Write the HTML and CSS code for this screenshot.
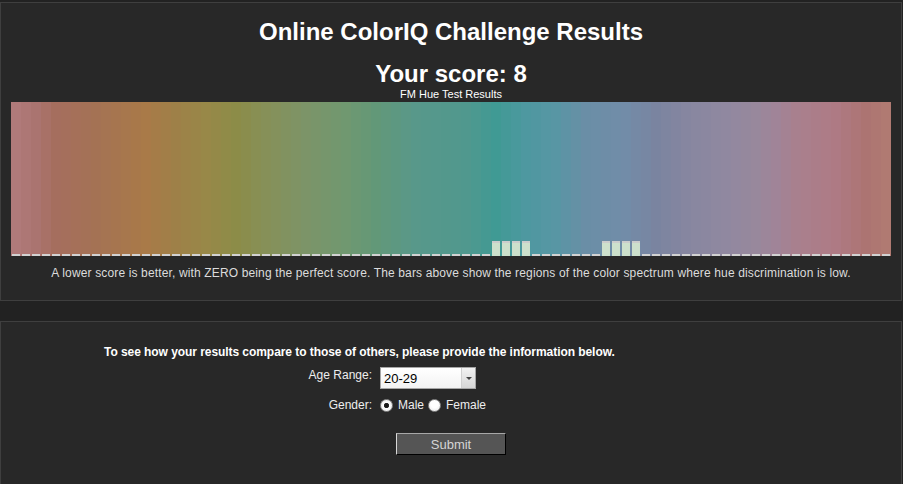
FILE: index.html
```html
<!DOCTYPE html>
<html lang="en">
<head>
<meta charset="utf-8">
<title>Online ColorIQ Challenge Results</title>
<link rel="stylesheet" href="styles.css">
</head>
<body>
<section class="panel results">
  <h1 class="title">Online ColorIQ Challenge Results</h1>
  <h2 class="score">Your score: 8</h2>
  <div class="sub">FM Hue Test Results</div>
  <div class="spectrum" id="spectrum"></div>
  <p class="note">A lower score is better, with ZERO being the perfect score. The bars above show the regions of the color spectrum where hue discrimination is low.</p>
</section>
<section class="panel compare">
  <form class="form">
    <p class="lead">To see how your results compare to those of others, please provide the information below.</p>
    <div class="row">
      <label class="label" for="age">Age Range:</label>
      <div class="select">
        <select id="age" class="sel">
          <option>20-29</option>
        </select>
        <span class="arrow"></span>
      </div>
    </div>
    <div class="row">
      <span class="label">Gender:</span>
      <div class="radios">
        <input type="radio" name="g" class="radio" id="male" checked>
        <label for="male" class="rlabel">Male</label>
        <input type="radio" name="g" class="radio" id="female">
        <label for="female" class="rlabel">Female</label>
      </div>
    </div>
    <div class="row submit-row">
      <span></span>
      <button type="button" class="submit">Submit</button>
    </div>
  </form>
</section>
<script src="script.js"></script>
</body>
</html>
```

FILE: styles.css
```css
html, body {
  margin: 0;
}
body {
  background: #222222;
  padding: 2px 1px 0 0;
  font-family: "Liberation Sans", Arial, sans-serif;
  color: #dddddd;
}
.panel {
  background: #282828;
  border: 1px solid #3f3f3f;
}
.results {
  padding: 16px 0 20px;
}
.title {
  margin: 0;
  font-size: 24px;
  line-height: 26px;
  font-weight: bold;
  color: #ffffff;
  text-align: center;
}
.score {
  margin: 17px 0 0;
  font-size: 24px;
  line-height: 24px;
  font-weight: bold;
  color: #ffffff;
  text-align: center;
}
.sub {
  margin-top: 3px;
  font-size: 11px;
  line-height: 10px;
  text-align: center;
  color: #ffffff;
}
.spectrum {
  display: flex;
  height: 154px;
  margin: 3px 10px 0;
}
.col {
  flex: 1;
  display: flex;
  flex-direction: column;
  justify-content: flex-end;
  align-items: center;
}
.bar {
  width: 8px;
  height: 2px;
  background: #d2d2d2;
}
.bar.tall {
  height: 13px;
  border-top: 2px solid #cccccc;
  background: #cde0cc;
}
.note {
  margin: 10px 0 0;
  font-size: 12px;
  line-height: 14px;
  letter-spacing: 0.14px;
  text-align: center;
  color: #dcdcdc;
}
.compare {
  margin-top: 20px;
}
.form {
  padding: 23px 0 40px 103px;
}
.lead {
  margin: 0;
  font-size: 12px;
  line-height: 14px;
  letter-spacing: -0.06px;
  font-weight: bold;
  color: #ffffff;
}
.row {
  display: grid;
  grid-template-columns: 268px auto;
  column-gap: 8px;
  margin-top: 8px;
  align-items: start;
}
.label {
  text-align: right;
  font-size: 12px;
  line-height: 14px;
  padding-top: 1px;
  color: #eeeeee;
}
.select {
  position: relative;
  width: 96px;
  height: 22px;
}
.sel {
  -webkit-appearance: none;
  appearance: none;
  display: block;
  width: 96px;
  height: 22px;
  box-sizing: border-box;
  margin: 0;
  border: 1px solid #a6a6a6;
  border-radius: 0;
  background: linear-gradient(#ffffff, #f3f3f3);
  padding: 0 0 0 3px;
  font-family: "Liberation Sans", Arial, sans-serif;
  font-size: 13px;
  color: #000000;
  outline: none;
}
.arrow {
  position: absolute;
  top: 1px;
  right: 1px;
  width: 14px;
  height: 20px;
  box-sizing: border-box;
  border-left: 1px solid #d0d0d0;
  background: linear-gradient(#f2f2f2, #d6d6d6);
}
.arrow::after {
  content: "";
  position: absolute;
  left: 4px;
  top: 9px;
  border-left: 3px solid transparent;
  border-right: 3px solid transparent;
  border-top: 3px solid #444444;
}
.radios {
  display: flex;
  align-items: flex-start;
}
.radio {
  -webkit-appearance: none;
  appearance: none;
  width: 13px;
  height: 13px;
  margin: 2px 5px 0 0;
  border-radius: 50%;
  box-sizing: border-box;
  border: 1px solid #8a8a8a;
  background: radial-gradient(circle at 50% 40%, #ffffff 40%, #e4e4e4 100%);
}
.radio:checked {
  background: radial-gradient(circle at 50% 50%, #111111 0, #222222 2.2px, #ffffff 3px, #f4f4f4 60%, #dcdcdc 100%);
}
.rlabel {
  font-size: 12px;
  line-height: 14px;
  padding-top: 1px;
  color: #eeeeee;
  margin-right: 4px;
}
.submit-row {
  margin-top: 21px;
}
.submit {
  margin-left: 16px;
  width: 110px;
  height: 22px;
  box-sizing: border-box;
  background: #555555;
  color: #d4d4d4;
  border: 1px solid;
  border-color: #a8a8a8 #000000 #000000 #d8d8d8;
  font-family: "Liberation Sans", Arial, sans-serif;
  font-size: 13px;
  padding: 0;
}
```

FILE: script.js
```js
(function () {
  var stops = [
    [0, "b07a7a"], [2, "aa7470"], [4, "a56e5e"], [8, "a47254"], [13, "a97a48"],
    [16, "9e8048"], [19, "988848"], [22, "8c8c48"], [25, "869058"], [29, "7c9468"],
    [33, "709870"], [36, "629878"], [40, "58988a"], [45, "50988e"], [48, "409a94"],
    [51, "4e98a0"], [54, "5896a4"], [57, "6a8ea6"], [61, "728ca8"], [64, "7a84a0"],
    [67, "8686a0"], [71, "9088a0"], [74, "98889c"], [76, "a08498"], [78, "a8808e"],
    [82, "ae7a84"], [85, "ac7472"], [87, "b07a72"]
  ];
  function hex(h) {
    return [parseInt(h.slice(0, 2), 16), parseInt(h.slice(2, 4), 16), parseInt(h.slice(4, 6), 16)];
  }
  function colorAt(i) {
    for (var s = 0; s < stops.length - 1; s++) {
      var a = stops[s], b = stops[s + 1];
      if (i >= a[0] && i <= b[0]) {
        var t = (i - a[0]) / (b[0] - a[0]);
        var ca = hex(a[1]), cb = hex(b[1]);
        return "rgb(" + ca.map(function (v, k) { return Math.round(v + (cb[k] - v) * t); }).join(",") + ")";
      }
    }
    return "#" + stops[stops.length - 1][1];
  }
  var tall = [48, 49, 50, 51, 59, 60, 61, 62];
  var spec = document.getElementById("spectrum");
  for (var i = 0; i < 88; i++) {
    var col = document.createElement("div");
    col.className = "col";
    col.style.background = colorAt(i);
    var bar = document.createElement("div");
    bar.className = tall.indexOf(i) >= 0 ? "bar tall" : "bar";
    col.appendChild(bar);
    spec.appendChild(col);
  }
})();
```
